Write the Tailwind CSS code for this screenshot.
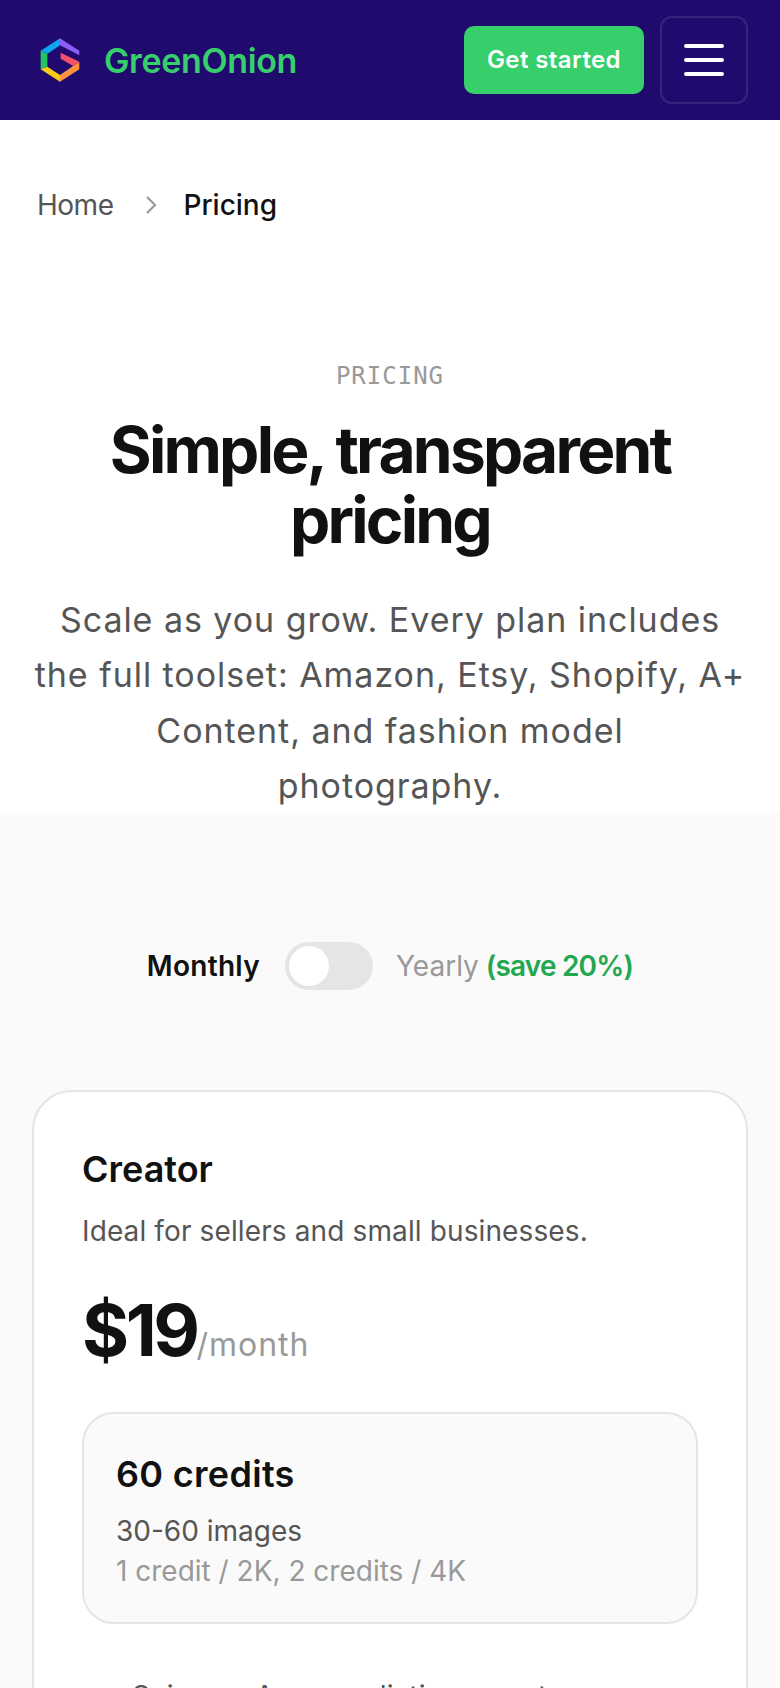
<!DOCTYPE html>
<html lang="en">
<head>
  <meta charset="UTF-8">
  <meta name="viewport" content="width=device-width, initial-scale=1.0">
  <title>Pricing - GreenOnion</title>
  <script src="https://cdn.jsdelivr.net/npm/@tailwindcss/browser@4"></script>
</head>
<body class="bg-white font-['Inter',sans-serif] text-[#111111] overflow-hidden">
  <!-- Header -->
  <header class="h-[120px] bg-[#200a6e] flex items-center justify-between pl-[40px] pr-[32px]">
    <a class="flex items-center gap-[24px]">
      <svg class="w-[40px] h-[44px]" viewBox="60 55 120 130">
        <polygon points="120,55 62,92 82,102 120,76" fill="#0ea5f0"/>
        <polygon points="120,55 178,92 178,106 120,76" fill="#8b5cf6"/>
        <polygon points="62,92 82,102 82,140 62,148" fill="#22c55e"/>
        <polygon points="62,148 82,140 120,165 120,185" fill="#facc15"/>
        <polygon points="120,185 120,165 178,125 178,148" fill="#fb923c"/>
        <polygon points="122,98 178,125 160,138 122,116" fill="#f4516c"/>
      </svg>
      <span class="text-[34px] font-semibold tracking-[-0.35px] text-[#36cf6b]">GreenOnion</span>
    </a>
    <div class="flex items-center gap-[16px]">
      <button class="w-[180px] h-[68px] rounded-[10px] bg-[#36cf6b] text-white text-[24px] font-semibold tracking-[0.4px]">Get started</button>
      <button class="w-[88px] h-[88px] rounded-[12px] border-2 border-white/10 flex flex-col items-center justify-center gap-[10px]">
        <span class="block w-[40px] h-[4px] rounded-full bg-white"></span>
        <span class="block w-[40px] h-[4px] rounded-full bg-white"></span>
        <span class="block w-[40px] h-[4px] rounded-full bg-white"></span>
      </button>
    </div>
  </header>

  <!-- Breadcrumb -->
  <nav class="flex items-center px-[37px] pt-[63px] pb-[1px] text-[28px] leading-[44px]">
    <span class="text-[#555555] tracking-[-0.5px]">Home</span>
    <svg class="w-[12px] h-[18px] ml-[32px] mr-[26px]" viewBox="0 0 12 18" fill="none" stroke="#999999" stroke-width="2.2"><path d="M2 1l8 8-8 8"/></svg>
    <span class="font-medium">Pricing</span>
  </nav>

  <!-- Hero -->
  <section class="h-[585px] px-[32px] pt-[130px] text-center overflow-hidden">
    <p class="font-['DejaVu_Sans_Mono',monospace] text-[24px] leading-[36px] tracking-[1px] text-[#999999]">PRICING</p>
    <h1 class="mt-[21px] text-[64px] leading-[70px] font-bold tracking-[-2.8px]">Simple, transparent pricing</h1>
    <p class="mt-[37px] text-[34px] leading-[55.4px] tracking-[0.95px] text-[#555555]">Scale as you grow. Every plan includes the full toolset: Amazon, Etsy, Shopify, A+ Content, and fashion model<br>photography.</p>
  </section>

  <!-- Plans -->
  <section class="bg-[#fafafa] px-[32px] h-[875px] overflow-hidden">
    <div class="pt-[129px] flex items-center justify-center text-[28px] leading-[48px]">
      <span class="font-semibold tracking-[0.3px]">Monthly</span>
      <span class="ml-[25px] w-[88px] h-[48px] rounded-full bg-[#e5e5e5] p-[4px]">
        <span class="block w-[40px] h-[40px] rounded-full bg-white"></span>
      </span>
      <span class="ml-[23px] text-[#999999]">Yearly</span>
      <span class="ml-[7px] font-semibold tracking-[-0.8px] text-[#22a74f]">(save 20%)</span>
    </div>

    <article class="mt-[100px] rounded-[40px] border-2 border-[#e5e5e5] bg-white px-[48px] pt-[49px] h-[700px]">
      <h2 class="text-[36px] leading-[56px] font-semibold">Creator</h2>
      <p class="mt-[12px] text-[28px] leading-[44px] tracking-[0.12px] text-[#555555]">Ideal for sellers and small businesses.</p>
      <div class="mt-[29px] flex items-baseline">
        <span class="text-[72px] leading-[96px] font-bold tracking-[-3.5px]">$19</span>
        <span class="text-[32px] tracking-[1px] text-[#999999]">/month</span>
      </div>
      <div class="mt-[34px] h-[212px] rounded-[32px] border-2 border-[#e5e5e5] bg-[#fafafa] px-[32px] pt-[36px]">
        <p class="text-[36px] leading-[48px] font-semibold tracking-[0.3px]">60 credits</p>
        <p class="mt-[13px] text-[28px] leading-[40px] text-[#555555]">30-60 images</p>
        <p class="text-[28px] leading-[40px] text-[#999999]">1 credit / 2K, 2 credits / 4K</p>
      </div>
      <p class="mt-[50px] pl-[50px] text-[28px] leading-[44px] tracking-[0.4px] [word-spacing:6px] text-[#555555]">Science Amazon listing assets</p>
    </article>
  </section>
</body>
</html>
